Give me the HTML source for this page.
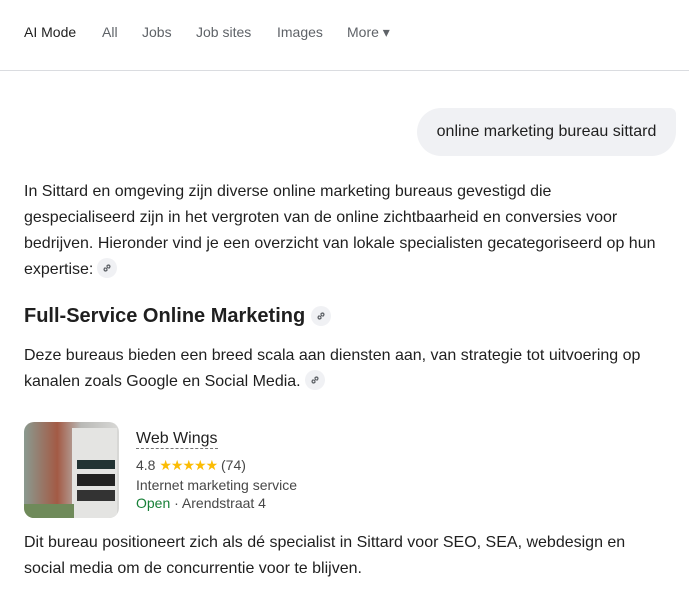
<!DOCTYPE html>
<html><head><meta charset="utf-8"><style>
body{margin:0;width:689px;height:594px;overflow:hidden;background:#fff;font-family:"Liberation Sans",Arial,sans-serif;color:#1f1f1f;position:relative}
.nav{position:absolute;top:24px;left:24px;font-size:14px;color:#5f6368}
.nav span{position:absolute;white-space:nowrap;top:0}
.hr{position:absolute;top:70px;left:0;width:689px;height:1px;background:#dadce0}
.bubble{position:absolute;left:417px;top:108px;width:259px;height:48px;background:#f0f1f4;border-radius:24px 6px 24px 24px;font-size:16px;line-height:48px;text-align:center;color:#1f1f1f}
.p{position:absolute;left:24px;font-size:16px;line-height:26px;width:665px;white-space:nowrap}
.lk{display:inline-block;width:20px;height:20px;border-radius:10px;background:#f0f1f4;vertical-align:-4px;margin-left:4px;position:relative}
.lk svg{position:absolute;left:5px;top:5px}
h2{position:absolute;left:24px;top:302px;margin:0;font-size:20px;font-weight:bold;line-height:28px}
.img{position:absolute;left:24px;top:422px;width:95px;height:96px;border-radius:10px;overflow:hidden;background:linear-gradient(90deg,#8a9a90 0,#a35a45 35%,#b9b9b6 60%,#d8d8d6 100%)}
.card{position:absolute;left:136px;font-size:14px;color:#474747;white-space:nowrap}
</style></head><body>
<div class="nav"><span style="left:0;color:#1f1f1f">AI Mode</span><span style="left:78px">All</span><span style="left:118px">Jobs</span><span style="left:172px">Job sites</span><span style="left:253px">Images</span><span style="left:323px">More ▾</span></div>
<div class="hr"></div>
<div class="bubble">online marketing bureau sittard</div>
<div class="p" style="top:179px">In Sittard en omgeving zijn diverse online marketing bureaus gevestigd die<br>gespecialiseerd zijn in het vergroten van de online zichtbaarheid en conversies voor<br>bedrijven. Hieronder vind je een overzicht van lokale specialisten gecategoriseerd op hun<br>expertise:<span class="lk"><svg width="10" height="10" viewBox="0 0 10 10" fill="none" stroke="#5f6368" stroke-width="1.3"><path d="M4 6l2-2M3.5 4.5l-1 1a1.4 1.4 0 002 2l1-1M6.5 5.5l1-1a1.4 1.4 0 00-2-2l-1 1"/></svg></span></div>
<h2>Full-Service Online Marketing<span class="lk" style="margin-left:6px"><svg width="10" height="10" viewBox="0 0 10 10" fill="none" stroke="#5f6368" stroke-width="1.3"><path d="M4 6l2-2M3.5 4.5l-1 1a1.4 1.4 0 002 2l1-1M6.5 5.5l1-1a1.4 1.4 0 00-2-2l-1 1"/></svg></span></h2>
<div class="p" style="top:343px">Deze bureaus bieden een breed scala aan diensten aan, van strategie tot uitvoering op<br>kanalen zoals Google en Social Media.<span class="lk"><svg width="10" height="10" viewBox="0 0 10 10" fill="none" stroke="#5f6368" stroke-width="1.3"><path d="M4 6l2-2M3.5 4.5l-1 1a1.4 1.4 0 002 2l1-1M6.5 5.5l1-1a1.4 1.4 0 00-2-2l-1 1"/></svg></span></div>
<div class="img"><div style="position:absolute;left:48px;top:6px;width:45px;height:90px;background:#e4e4e2"></div><div style="position:absolute;left:53px;top:38px;width:38px;height:9px;background:#233"></div><div style="position:absolute;left:53px;top:52px;width:38px;height:12px;background:#222"></div><div style="position:absolute;left:53px;top:68px;width:38px;height:11px;background:#333"></div><div style="position:absolute;left:0;top:82px;width:50px;height:14px;background:#6f8a5a"></div></div>
<div class="card" style="top:430px;font-size:16px;color:#1f1f1f;border-bottom:1px dashed #777;line-height:18px">Web Wings</div>
<div class="card" style="top:457px">4.8 <span style="color:#fbbc04;letter-spacing:-1px">★★★★★</span> (74)</div>
<div class="card" style="top:477px">Internet marketing service</div>
<div class="card" style="top:495px"><span style="color:#188038">Open</span> · Arendstraat 4</div>
<div class="p" style="top:530px">Dit bureau positioneert zich als dé specialist in Sittard voor SEO, SEA, webdesign en<br>social media om de concurrentie voor te blijven.</div>
</body></html>
